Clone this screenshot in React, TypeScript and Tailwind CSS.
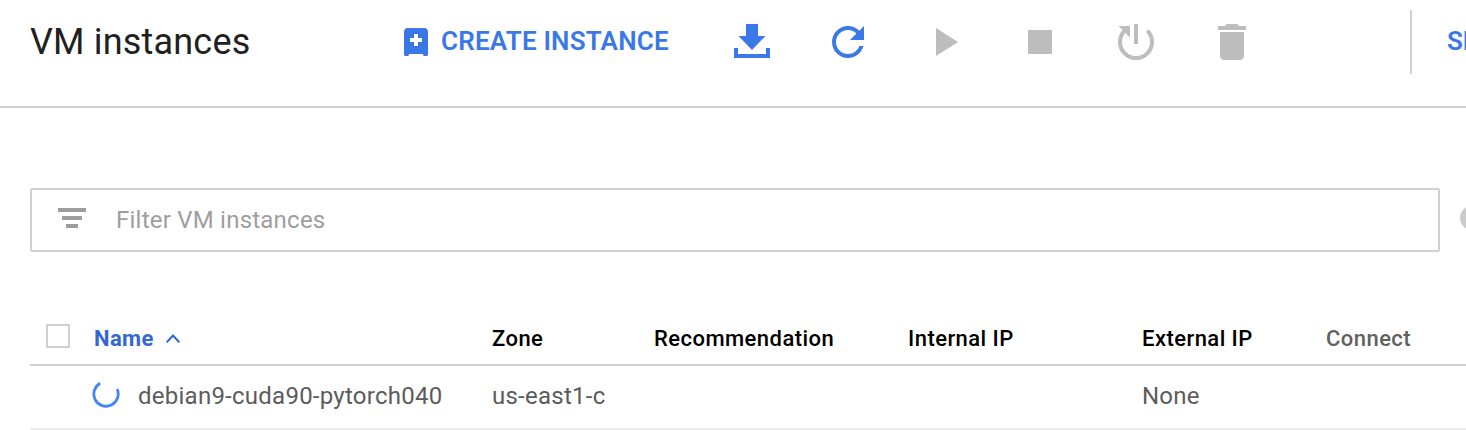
import type { ReactNode } from "react";

const BLUE = "#3b78e7";
const GREY = "#bdbdbd";

function ToolIcon({ label, color, children }: { label: string; color: string; children: ReactNode }) {
  return (
    <button type="button" aria-label={label} className="size-12 shrink-0">
      <svg viewBox="0 0 48 48" width="48" height="48" fill={color}>
        {children}
      </svg>
    </button>
  );
}

function Toolbar() {
  return (
    <header className="flex h-[108px] shrink-0 items-start border-b-2 border-[#d0d0d0]">
      <h1 className="mt-[18px] w-[404px] shrink-0 pl-[30px] text-[36px] leading-[48px] tracking-[0.18px] text-[#212121]">
        VM instances
      </h1>
      <button
        type="button"
        className="mt-[18px] flex h-12 w-[324px] shrink-0 items-center text-[26px] leading-[48px] font-semibold tracking-[0.19px] text-[#3b78e7]"
      >
        <svg viewBox="0 0 24 28" width="24" height="28" fill={BLUE} className="mr-[13px]">
          <path
            fillRule="evenodd"
            d="M4 0h16a4 4 0 0 1 4 4v22.500a1.500 1.500 0 0 1-1.500 1.500h-2a1.500 1.500 0 0 1-1.500-1.500V26H5v.5A1.500 1.500 0 0 1 3.500 28h-2A1.500 1.500 0 0 1 0 26.500V4a4 4 0 0 1 4-4zM10 6v4H6v4h4v4h4v-4h4v-4h-4V6z"
          />
        </svg>
        <span className="relative -top-px whitespace-nowrap">CREATE INSTANCE</span>
      </button>
      <div className="mt-[18px] flex shrink-0 gap-12">
        <ToolIcon label="Import VM" color={BLUE}>
          <path d="M18 6h12v12h7.500L24 32 10.500 18H18zM6 30h4v6h28v-6h4v10H6z" />
        </ToolIcon>
        <ToolIcon label="Refresh" color={BLUE}>
          <path
            transform="scale(2)"
            d="M17.65 6.35C16.2 4.9 14.21 4 12 4c-4.42 0-7.99 3.58-7.99 8s3.57 8 7.99 8c3.73 0 6.84-2.55 7.730-6h-2.080c-.82 2.330-3.040 4-5.650 4-3.310 0-6-2.690-6-6s2.690-6 6-6c1.660 0 3.140.69 4.220 1.780L13 11h7V4l-2.350 2.350z"
          />
        </ToolIcon>
        <ToolIcon label="Start" color={GREY}>
          <path d="M16 10v28l22-14z" />
        </ToolIcon>
        <ToolIcon label="Stop" color={GREY}>
          <path d="M12 12h24v24H12z" />
        </ToolIcon>
        <ToolIcon label="Reset" color={GREY}>
          <path d="M22 6h4v20h-4zM6.500 8H18v11.500z" />
          <path d="M12.700 12.700a16 16 0 1 0 22.600 0" fill="none" stroke={GREY} strokeWidth="4" />
        </ToolIcon>
        <ToolIcon label="Delete" color={GREY}>
          <path d="M12 38c0 2.200 1.800 4 4 4h16c2.200 0 4-1.800 4-4V14H12zM38 8h-7l-2-2H19l-2 2h-7v4h28z" />
        </ToolIcon>
      </div>
      <div className="mt-[10px] ml-[154px] h-16 w-0.5 shrink-0 bg-[#d0d0d0]" />
      <button
        type="button"
        className="mt-[17px] ml-[35px] shrink-0 text-[26px] leading-[48px] font-semibold whitespace-nowrap text-[#3b78e7]"
      >
        SHOW INFO PANEL
      </button>
    </header>
  );
}

function FilterBar() {
  return (
    <div className="mt-20 flex shrink-0 items-center pl-[30px]">
      <div className="flex h-16 w-[1410px] shrink-0 items-center rounded-[2px] border-2 border-[#d0d0d0] pl-[26px]">
        <svg viewBox="0 0 28 20" width="28" height="20" fill="#9e9e9e" className="relative -top-[2px]">
          <path d="M0 0h28v4H0zM4 8h20v4H4zM8 16h12v4H8z" />
        </svg>
        <span className="ml-[30px] text-[24px] leading-[60px] tracking-[0.23px] text-[#9e9e9e]">Filter VM instances</span>
      </div>
      <svg viewBox="0 0 24 24" width="24" height="24" className="relative -top-[2px] ml-5 shrink-0">
        <circle cx="12" cy="12" r="12" fill="#cccccc" />
      </svg>
    </div>
  );
}

const columns = "grid grid-cols-[64px_398px_162px_254px_234px_184px_1fr] shrink-0 ml-[30px] border-b-2";

function InstanceTable() {
  return (
    <div className="mt-[56px] flex flex-col">
      <div className={`${columns} h-[58px] border-[#d0d0d0] text-[22px] leading-[62px] font-medium tracking-[0.45px] text-black`}>
        <div className="pt-4 pl-4">
          <div className="size-6 border-2 border-[#d0d0d0]" />
        </div>
        <div className="flex font-bold tracking-[0.4px] text-[#3367d6]">
          <span className="w-[72px]">Name</span>
          <svg viewBox="0 0 14 9" width="14" height="9" className="mt-[26px]" fill="none" stroke="#3367d6" strokeWidth="2">
            <path d="M.7 8.200 7 1.500l6.300 6.700" />
          </svg>
        </div>
        <div>Zone</div>
        <div>Recommendation</div>
        <div>Internal IP</div>
        <div>External IP</div>
        <div className="text-[#616161]">Connect</div>
      </div>
      <div className={`${columns} h-16 border-[#ebebeb] text-[24px] leading-[60px] tracking-[0.25px] text-[#5c5c5c]`}>
        <div />
        <div className="flex">
          <svg viewBox="0 0 28 28" width="28" height="28" className="mt-[14px] -ml-[2px]" fill="none" stroke="#4285f4" strokeWidth="2.800">
            <path d="M8.200 3.300a12.200 12.200 0 1 0 17 5.800" />
          </svg>
          <span className="ml-[18px]">debian9-cuda90-pytorch040</span>
        </div>
        <div>us-east1-c</div>
        <div />
        <div />
        <div>None</div>
        <div />
      </div>
    </div>
  );
}

export default function App() {
  return (
    <main className="flex h-[430px] w-full flex-col overflow-hidden bg-white font-['Roboto',sans-serif]">
      <Toolbar />
      <FilterBar />
      <InstanceTable />
    </main>
  );
}
